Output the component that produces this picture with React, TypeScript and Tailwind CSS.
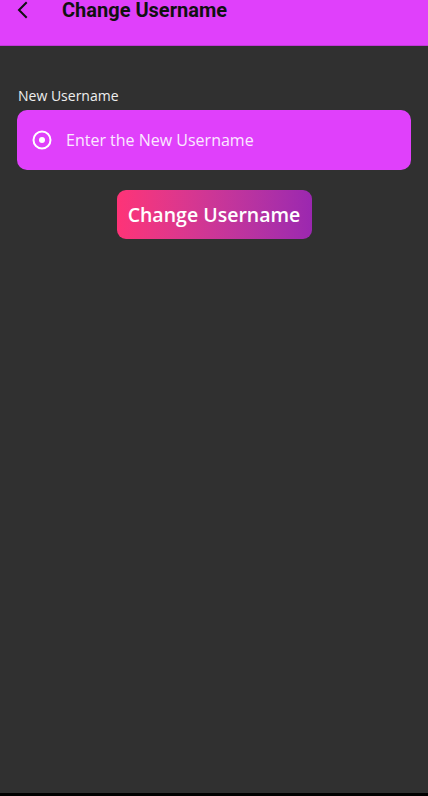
export default function App() {
  return (
    <div className="flex h-[796px] w-[428px] flex-col bg-[#303030]">
      <header className="flex h-[46px] shrink-0 items-start border-b border-[#c238d8] bg-[#e040fb]">
        <button className="ml-[14px] mt-[1px] flex h-[18px] w-[18px] items-center justify-center">
          <svg width="18" height="18" viewBox="0 0 18 18" fill="none">
            <path d="M12 2 L5 9 L12 16" stroke="#111" strokeWidth="2" strokeLinecap="square" />
          </svg>
        </button>
        <h1 className="ml-[30px] font-['Roboto',sans-serif] text-[20px] font-bold leading-[20px] text-[#111]">
          Change Username
        </h1>
      </header>

      <main className="flex flex-col px-[17px] pt-[40px] font-['Open_Sans',sans-serif]">
        <label className="ml-[1px] text-[14px] leading-[19px] text-[#eeeeee]">New Username</label>
        <div className="mt-[5px] flex h-[60px] items-center rounded-[10px] bg-[#e040fb] pl-[15px]">
          <svg width="20" height="20" viewBox="0 0 20 20" fill="none">
            <circle cx="10" cy="10" r="8.5" stroke="#fff" strokeWidth="2" />
            <circle cx="10" cy="10" r="3" fill="#fff" />
          </svg>
          <span className="ml-[14px] text-[16px] text-[#fbe9ff]">Enter the New Username</span>
        </div>

        <div className="mt-[20px] flex justify-center">
          <button className="h-[49px] w-[195px] rounded-[9px] bg-gradient-to-r from-[#fe3377] to-[#9b27b0] text-[19.5px] font-semibold text-white">
            Change Username
          </button>
        </div>
      </main>

      <div className="flex-1" />
      <div className="h-[3px] bg-black" />
    </div>
  );
}
